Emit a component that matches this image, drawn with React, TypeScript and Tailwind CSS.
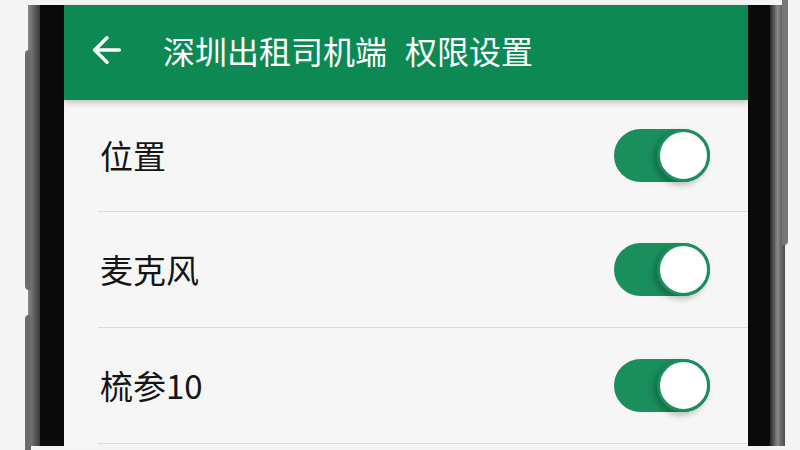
import { ArrowLeft } from 'lucide-react';

type Permission = {
  label: string;
  on: boolean;
};

const permissions: Permission[] = [
  { label: '位置', on: true },
  { label: '麦克风', on: true },
  { label: '梳参10', on: true },
];

const font = { fontFamily: '"Noto Sans CJK SC", "Noto Sans", sans-serif' };

const Toggle = ({ on }: { on: boolean }) => (
  <div
    className={`relative h-[53px] w-[96px] rounded-full ${on ? 'bg-[#1a8f5d]' : 'bg-gray-300'}`}
  >
    <div className="absolute right-0 top-0 h-[53px] w-[53px] rounded-full border-[3px] border-[#1a8f5d] bg-white shadow-[-3px_3px_6px_rgba(0,0,0,0.25)]" />
  </div>
);

export default function App() {
  return (
    <div className="h-[450px] w-[800px] overflow-hidden bg-[#f4f4f4]" style={font}>
      <div className="relative ml-[28px] mt-[5px] flex h-[441px] w-[757px]">
        {/* side buttons */}
        <div className="absolute left-[-3px] top-[45px] h-[240px] w-[6px] rounded-l bg-[#6b6b6b]" />
        <div className="absolute left-[-3px] top-[310px] h-[140px] w-[6px] rounded-l bg-[#6b6b6b]" />
        <div className="absolute right-[-3px] top-[-10px] h-[250px] w-[6px] rounded-r bg-[#777]" />

        <div className="w-[12px] bg-gradient-to-r from-[#8a8a8a] to-[#3a3a3a]" />
        <div className="w-[24px] bg-[#0a0a0a]" />

        <div className="flex flex-1 flex-col bg-[#f6f6f6]">
          <header className="flex h-[95px] items-center bg-[#0d8a54] pb-[6px] pl-[22px] text-white shadow-[0_3px_6px_rgba(0,0,0,0.2)]">
            <ArrowLeft className="h-[42px] w-[42px]" strokeWidth={2} />
            <h1 className="ml-[35px] flex gap-[18px] text-[32px] font-normal">
              <span>深圳出租司机端</span>
              <span>权限设置</span>
            </h1>
          </header>

          <ul className="flex flex-col pl-[34px]">
            {permissions.map((item, index) => (
              <li
                key={index}
                className="flex h-[116px] items-center justify-between border-b border-[#dcdcdc] pr-[38px] first:h-[112px]"
              >
                <span className="pl-[2px] text-[33px] text-[#151515]">{item.label}</span>
                <Toggle on={item.on} />
              </li>
            ))}
          </ul>
        </div>

        <div className="w-[22px] bg-[#0a0a0a]" />
        <div className="w-[15px] bg-gradient-to-r from-[#2a2a2a] via-[#888] to-[#4a4a4a]" />
      </div>
    </div>
  );
}
